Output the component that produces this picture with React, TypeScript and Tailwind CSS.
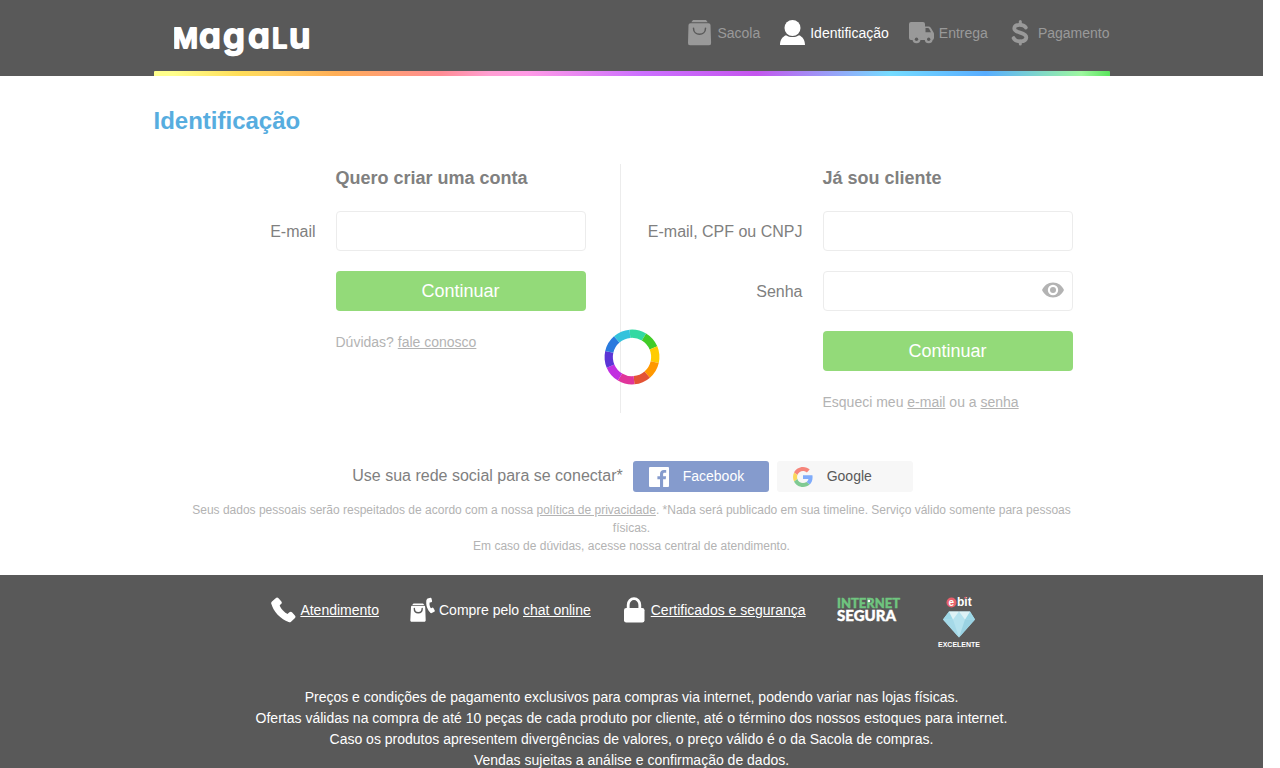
import type { ReactNode } from 'react';

const spinnerColors = [
  '#33d9a2', '#41cc28', '#ffcc00', '#ff9800', '#e35335',
  '#e0359b', '#c12fe0', '#5b35d6', '#2a7ade', '#34c2dc',
];

function Logo() {
  return (
    <svg width="142" height="48" viewBox="0 0 142 48" role="img" aria-label="Magalu">
      <text
        y="35"
        className="font-['Inter','Open_Sans',sans-serif] font-semibold [font-feature-settings:'cv11']"
        fill="#fff"
        stroke="#fff"
        strokeWidth="1.8"
        strokeLinejoin="round"
      >
        <tspan x="-1" fontSize="27">M</tspan>
        <tspan x="25" fontSize="35">a</tspan>
        <tspan x="49" fontSize="35">g</tspan>
        <tspan x="74" fontSize="35">a</tspan>
        <tspan x="98" fontSize="27">L</tspan>
        <tspan x="115" fontSize="35">u</tspan>
      </text>
    </svg>
  );
}

function BagIcon() {
  return (
    <svg width="25" height="26" viewBox="0 0 25 26" fill="currentColor" aria-hidden="true">
      <path d="M6 0h13l1.700 2.200H4.300z" />
      <path d="M3.500 3.200h18a2 2 0 0 1 2 1.900l.6 18a2 2 0 0 1-2 2.200H3a2 2 0 0 1-2-2.200l.5-18a2 2 0 0 1 2-1.900z" />
      <path d="M6.500 8.200c0 8.200 12 8.200 12 0" fill="none" stroke="#595959" strokeWidth="1.500" strokeLinecap="round" />
    </svg>
  );
}

function UserIcon() {
  return (
    <svg width="25" height="26" viewBox="0 0 25 26" fill="currentColor" aria-hidden="true">
      <circle cx="12.500" cy="8" r="8" />
      <path d="M0 25c0-5 2.500-8.500 6-9.800 3.700 2.500 9.300 2.500 13 0C22.500 16.500 25 20 25 25z" />
    </svg>
  );
}

function TruckIcon() {
  return (
    <svg width="25" height="26" viewBox="0 0 25 26" fill="currentColor" aria-hidden="true">
      <path fillRule="evenodd" d="M2 2h12a2 2 0 0 1 2 2v2.500h3.300c1.300 0 2.200.6 2.800 1.700l2.200 3.700c.4.800.7 1.400.7 2.200V18a2 2 0 0 1-2 2H2a2 2 0 0 1-2-2V4a2 2 0 0 1 2-2zm14.500 6v4.200h5.500l-1.700-3.300c-.3-.6-.7-.9-1.400-.9z" />
      <circle cx="7.500" cy="19.300" r="4" />
      <circle cx="19.700" cy="19.300" r="4" />
      <circle cx="7.500" cy="19.300" r="1.700" fill="#595959" />
      <circle cx="19.700" cy="19.300" r="1.700" fill="#595959" />
    </svg>
  );
}

function DollarIcon() {
  return (
    <svg width="25" height="26" viewBox="0 0 25 26" fill="none" stroke="currentColor" strokeLinecap="round" aria-hidden="true">
      <path d="M12.300 1.500v3M12.300 21v3" strokeWidth="3" />
      <path d="M17.800 7.500C16.300 4.300 6.800 3.200 6.300 8.300c-.3 5.300 12.300 3.300 12 9.200-.4 5-10.500 5-12.700.6" strokeWidth="3.800" />
    </svg>
  );
}

function HandsetIcon() {
  return (
    <svg width="25" height="26" viewBox="0 0 25 26" aria-hidden="true" fill="#fff">
      <rect x="-4.500" y="-4" width="9" height="8" rx="2" transform="translate(5.500 5.800) rotate(-42)" />
      <rect x="-4.500" y="-4" width="9" height="8" rx="2" transform="translate(19.200 20) rotate(-42)" />
      <path d="M2.500 9.500C5 15.500 9.500 20.500 15.500 23.500" fill="none" />
      <path d="M.3 6.500C2 14 9.500 22.500 18.500 25.300l-1.300-8.100C13.500 15.800 9.500 11.500 8.300 7.500z" />
    </svg>
  );
}

function ChatBagIcon() {
  return (
    <svg width="25" height="26" viewBox="0 0 25 26" fill="currentColor" aria-hidden="true">
      <path d="M3.500 6.500h9.500l1.300 1.600H2.200z" />
      <path d="M2.300 8.800h11.700c.7 0 1.200.4 1.200 1.200l.5 13.300c0 .9-.5 1.500-1.400 1.500H1.700c-.9 0-1.500-.6-1.400-1.500L1 10c0-.8.6-1.200 1.300-1.200z" />
      <path d="M4.300 11.500c0 5.700 7.900 5.700 7.900 0" fill="none" stroke="#595959" strokeWidth="1.400" strokeLinecap="round" />
      <rect x="17" y="1.200" width="4.800" height="4.400" rx="1" transform="rotate(-12 19 3)" />
      <rect x="19.300" y="11.200" width="4.800" height="4.600" rx="1" transform="rotate(-28 21.500 13)" />
      <path d="M16.500 2.500c-1 5.500.8 10.500 4.300 13.500l1-3.600c-2-2-2.600-4.600-2.200-7.200z" />
    </svg>
  );
}

function LockIcon() {
  return (
    <svg width="25" height="26" viewBox="0 0 25 26" fill="currentColor" aria-hidden="true">
      <path d="M6.200 12V8a5.800 6.300 0 0 1 11.600 0v4" fill="none" stroke="currentColor" strokeWidth="2.800" />
      <rect x="2" y="11" width="20.500" height="14.500" rx="2.200" />
    </svg>
  );
}

function EyeIcon() {
  return (
    <svg width="22" height="16" viewBox="0 0 22 16" aria-hidden="true">
      <path d="M0 8C2 3.500 6 .5 11 .5S20 3.500 22 8c-2 4.500-6 7.500-11 7.500S2 12.500 0 8z" fill="#b3b3b3" />
      <circle cx="11" cy="8" r="5.200" fill="#fff" />
      <circle cx="11" cy="8" r="3" fill="#b3b3b3" />
    </svg>
  );
}

function FacebookIcon() {
  return (
    <svg width="20" height="20" viewBox="0 0 20 20" aria-hidden="true">
      <rect width="20" height="20" rx="1" fill="#fff" />
      <path d="M11 20v-7.700H8.400v-3H11V7c0-2.600 1.600-4 3.900-4l2.300.1v2.700h-1.600c-1.200 0-1.500.6-1.500 1.500v2h3l-.4 3h-2.600V20z" fill="#859bcd" />
    </svg>
  );
}

function GoogleIcon() {
  return (
    <svg width="20" height="20" viewBox="0 0 48 48" aria-hidden="true">
      <path fill="#f6857b" d="M24 9.500c3.540 0 6.710 1.220 9.210 3.600l6.850-6.850C35.900 2.380 30.470 0 24 0 14.620 0 6.510 5.380 2.560 13.220l7.980 6.190C12.430 13.720 17.740 9.500 24 9.500z" />
      <path fill="#80acfa" d="M46.980 24.550c0-1.570-.15-3.090-.38-4.550H24v9.020h12.940c-.58 2.960-2.260 5.480-4.780 7.180l7.730 6c4.510-4.180 7.090-10.360 7.090-17.650z" />
      <path fill="#fbd759" d="M10.530 28.590c-.48-1.450-.76-2.990-.76-4.590s.27-3.140.76-4.590l-7.980-6.190C.92 16.460 0 20.120 0 24c0 3.880.92 7.540 2.560 10.780z" />
      <path fill="#80ca92" d="M24 48c6.480 0 11.930-2.130 15.890-5.810l-7.730-6c-2.150 1.450-4.920 2.300-8.160 2.300-6.260 0-11.570-4.220-13.470-9.910l-7.980 6.190C6.510 42.620 14.620 48 24 48z" />
    </svg>
  );
}

function InternetSegura() {
  return (
    <svg width="62" height="32" viewBox="0 0 62 32" className="overflow-visible font-['Lato',sans-serif] font-black" role="img" aria-label="Internet Segura">
      <text x="0" y="11" fontSize="13" fill="#6fc57f" stroke="#6fc57f" strokeWidth=".4">INTERNET</text>
      <text x="0" y="24" fontSize="15" fill="#fff" stroke="#fff" strokeWidth=".4">SEGURA</text>
      <circle cx="32" cy="4" r="1.300" fill="#fff" />
    </svg>
  );
}

function Ebit() {
  return (
    <svg width="62" height="54" viewBox="0 0 62 54" role="img" aria-label="ebit excelente" className="overflow-visible font-['Liberation_Sans',Arial,sans-serif] font-bold" fill="#fff">
      <circle cx="21.500" cy="5.500" r="5" fill="#e8606c" />
      <text x="18.500" y="8.500" fontSize="10">e</text>
      <text x="27" y="9" fontSize="12">bit</text>
      <circle cx="35.500" cy=".8" r="1" fill="#e8606c" />
      <path d="M19 14.500h21l5 8-16 18-16-18z" fill="#b5e2ee" />
      <path d="m19 14.500-6 8h10zM40 14.500l5 8H35z" fill="#9dd8e7" />
      <path d="m19 14.500 4 8 6-8 6 8 5-8z" fill="#def2f6" />
      <path d="m13 22.500 16 18-6-18z" fill="#a5d9e8" />
      <path d="M45 22.500 29 40.500l6-18z" fill="#9ad2e2" />
      <text x="8" y="49.500" fontSize="7">EXCELENTE</text>
    </svg>
  );
}

function Spinner() {
  return (
    <svg
      width="56"
      height="56"
      viewBox="0 0 56 56"
      role="status"
      aria-label="Carregando"
      className="absolute top-[165px] left-1/2 -translate-x-1/2"
    >
      <g transform="rotate(-95 28 28)" fill="none" strokeWidth="8.300">
        {spinnerColors.map((color, i) => (
          <circle key={color} cx="28" cy="28" r="23.300" pathLength="10" stroke={color} strokeDasharray="1 9" strokeDashoffset={-i} />
        ))}
      </g>
    </svg>
  );
}

function Step({ icon, label, active = false }: { icon: ReactNode; label: string; active?: boolean }) {
  return (
    <li className={active ? 'flex items-center gap-[5px] text-white' : 'flex items-center gap-[5px] text-[#999]'} aria-current={active ? 'step' : undefined}>
      {icon}
      <span>{label}</span>
    </li>
  );
}

const inputClass = 'h-10 w-full rounded border border-[#ececec] bg-white px-3 text-base outline-none';
const submitClass = 'h-10 w-full rounded bg-[#93da79] text-lg text-white';
const labelClass = 'pt-0.5 text-right';
const titleClass = 'col-start-2 pt-0.5 text-lg leading-[25px] font-bold';
const linkClass = 'underline';

export default function App() {
  return (
    <div className="min-h-screen bg-white pr-[17px] font-['Liberation_Sans',Arial,sans-serif] text-[#808080]">
      <header className="bg-[#595959]">
        <div className="mx-auto max-w-[956px]">
          <div className="flex h-[71px] items-start justify-between pl-5">
            <a href="#inicio" className="pt-[13px]"><Logo /></a>
            <ol className="flex gap-5 pt-5 text-sm">
              <Step icon={<BagIcon />} label="Sacola" />
              <Step icon={<UserIcon />} label="Identificação" active />
              <Step icon={<TruckIcon />} label="Entrega" />
              <Step icon={<DollarIcon />} label="Pagamento" />
            </ol>
          </div>
          <div className="h-[5px] rounded-t-[1px] bg-[linear-gradient(90deg,#ffff8c_0%,#ffff8c_2%,#ffdd58_9%,#ffd060_12%,#ffae55_19%,#ff8c94_30%,#ff9fd2_35%,#ff9be6_39%,#cc70ff_51%,#c455ee_63%,#75dcff_77%,#58adff_87%,#9df79f_97%,#59e45b_100%)]" />
        </div>
      </header>

      <main className="mx-auto max-w-[956px] pt-[29px] pb-5">
        <h1 className="text-2xl font-bold text-[#57addf]">Identificação</h1>

        <div className="relative mt-[27px] flex">
          <form className="grid flex-1 grid-cols-[162px_250px] content-start items-center gap-5 border-r border-[#ececec]" onSubmit={(e) => e.preventDefault()}>
            <h2 className={titleClass}>Quero criar uma conta</h2>
            <label htmlFor="new-email" className={labelClass}>E-mail</label>
            <input id="new-email" type="email" className={inputClass} />
            <button type="submit" className={`col-start-2 ${submitClass}`}>Continuar</button>
            <p className="col-start-2 text-sm leading-[22px] text-[#b3b3b3]">
              Dúvidas? <a href="#contato" className={linkClass}>fale conosco</a>
            </p>
          </form>

          <form className="grid w-[489px] grid-cols-[182px_250px] content-start items-center gap-5" onSubmit={(e) => e.preventDefault()}>
            <h2 className={titleClass}>Já sou cliente</h2>
            <label htmlFor="login" className={labelClass}>E-mail, CPF ou CNPJ</label>
            <input id="login" type="text" className={inputClass} />
            <label htmlFor="password" className={labelClass}>Senha</label>
            <div className="relative">
              <input id="password" type="password" className={inputClass} />
              <button type="button" aria-label="Mostrar senha" className="absolute top-[11px] right-[9px]"><EyeIcon /></button>
            </div>
            <button type="submit" className={`col-start-2 ${submitClass}`}>Continuar</button>
            <p className="col-start-2 text-sm leading-[22px] text-[#b3b3b3]">
              Esqueci meu <a href="#email" className={linkClass}>e-mail</a> ou a <a href="#senha" className={linkClass}>senha</a>
            </p>
          </form>
          <Spinner />
        </div>

        <div className="mt-12 flex items-center justify-center gap-2 pl-0.5">
          <span className="pr-0.5 pb-0.5">Use sua rede social para se conectar*</span>
          <button type="button" className="flex h-[31px] w-[136px] items-center gap-[14px] rounded-[3px] bg-[#859bcd] pl-4 text-sm text-white">
            <FacebookIcon /><span className="pb-0.5">Facebook</span>
          </button>
          <button type="button" className="flex h-[31px] w-[136px] items-center gap-[14px] rounded-[3px] bg-[#f7f7f7] pl-4 text-sm text-[#595959]">
            <GoogleIcon /><span className="pb-0.5">Google</span>
          </button>
        </div>

        <div className="mt-[9px] px-5 text-center text-xs leading-[18px] text-[#b3b3b3]">
          <p>
            Seus dados pessoais serão respeitados de acordo com a nossa <a href="#privacidade" className={linkClass}>política de privacidade</a>. *Nada será publicado em sua timeline. Serviço válido somente para pessoas físicas.
          </p>
          <p>Em caso de dúvidas, acesse nossa central de atendimento.</p>
        </div>
      </main>

      <footer className="bg-[#595959] pt-[22px] text-sm text-white">
        <ul className="flex items-start justify-center gap-[31px]">
          <li className="flex items-center gap-1"><HandsetIcon /><a href="#atendimento" className={linkClass}>Atendimento</a></li>
          <li className="flex items-center gap-1"><ChatBagIcon /><span>Compre pelo <a href="#chat" className={linkClass}>chat online</a></span></li>
          <li className="flex items-center gap-1"><LockIcon /><a href="#seguranca" className={linkClass}>Certificados e segurança</a></li>
          <li><InternetSegura /></li>
          <li><Ebit /></li>
        </ul>
        <div className="mt-9 text-center leading-[21px]">
          <p>Preços e condições de pagamento exclusivos para compras via internet, podendo variar nas lojas físicas.</p>
          <p>Ofertas válidas na compra de até 10 peças de cada produto por cliente, até o término dos nossos estoques para internet.</p>
          <p>Caso os produtos apresentem divergências de valores, o preço válido é o da Sacola de compras.</p>
          <p>Vendas sujeitas a análise e confirmação de dados.</p>
        </div>
      </footer>
    </div>
  );
}
